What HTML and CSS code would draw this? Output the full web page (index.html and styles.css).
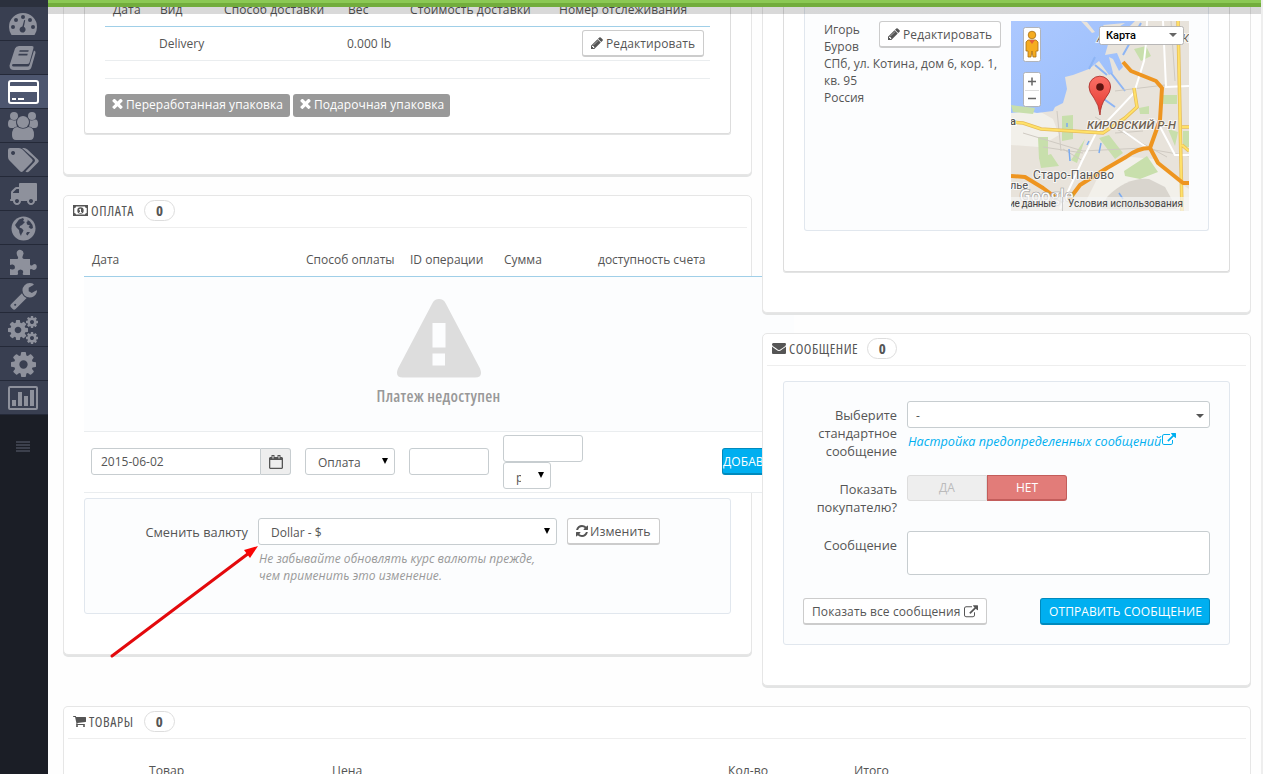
FILE: index.html
```
<!DOCTYPE html>
<html lang="ru">
<head>
    <meta charset="utf-8">
    <title>Заказы</title>
    <link rel="stylesheet" href="styles.css">
</head>
<body>
<svg class="defs">
    <symbol id="pencil" viewBox="0 0 1792 1792"><path d="M491 1536l91-91-235-235-91 91v107h128v128h107zm523-928q0-22-22-22-10 0-17 7l-542 542q-7 7-7 17 0 22 22 22 10 0 17-7l542-542q7-7 7-17zm-54-192l416 416-832 832h-416v-416zm683 96q0 53-37 90l-166 166-416-416 166-165q36-38 90-38 53 0 91 38l235 234q37 39 37 91z"/></symbol>
    <symbol id="times" viewBox="260 388 1272 1272"><path d="M1490 1322q0 40-28 68l-136 136q-28 28-68 28t-68-28l-294-294-294 294q-28 28-68 28t-68-28l-136-136q-28-28-28-68t28-68l294-294-294-294q-28-28-28-68t28-68l136-136q28-28 68-28t68 28l294 294 294-294q28-28 68-28t68 28l136 136q28 28 28 68t-28 68l-294 294 294 294q28 28 28 68z"/></symbol>
    <symbol id="refresh" viewBox="128 128 1536 1536"><path d="M1639 1056q0 5-1 7-64 268-268 434.500t-478 166.500q-146 0-282.500-55t-243.500-157l-129 129q-19 19-45 19t-45-19-19-45v-448q0-26 19-45t45-19h448q26 0 45 19t19 45-19 45l-137 137q71 66 161 102t187 36q134 0 250-65t186-179q11-17 53-117 8-23 30-23h192q13 0 22.500 9.500t9.500 22.500zm25-800v448q0 26-19 45t-45 19h-448q-26 0-45-19t-19-45 19-45l138-138q-148-137-349-137-134 0-250 65t-186 179q-11 17-53 117-8 23-30 23h-199q-13 0-22.500-9.500t-9.500-22.500v-7q65-268 270-434.500t480-166.500q146 0 284 55.500t245 156.500l130-129q19-19 45-19t45 19 19 45z"/></symbol>
    <symbol id="external" viewBox="0 0 1792 1600"><path d="M1408 928v320q0 119-84.500 203.500t-203.500 84.500h-832q-119 0-203.500-84.500t-84.500-203.500v-832q0-119 84.500-203.500t203.500-84.500h704q14 0 23 9t9 23v64q0 14-9 23t-23 9h-704q-66 0-113 47t-47 113v832q0 66 47 113t113 47h832q66 0 113-47t47-113v-320q0-14 9-23t23-9h64q14 0 23 9t9 23zm384-864v512q0 26-19 45t-45 19-45-19l-176-176-652 652q-10 10-23 10t-23-10l-114-114q-10-10-10-23t10-23l652-652-176-176q-19-19-19-45t19-45 45-19h512q26 0 45 19t19 45z"/></symbol>
    <symbol id="envelope" viewBox="0 256 1792 1408"><path d="M1792 710v794q0 66-47 113t-113 47h-1472q-66 0-113-47t-47-113v-794q44 49 101 87 362 246 497 345 57 42 92.500 65.500t94.500 48 110 24.500h2q51 0 110-24.500t94.500-48 92.500-65.500q170-123 498-345 57-39 100-87zm0-294q0 79-49 151t-122 123q-376 261-468 325-10 7-42.500 31t-54 38.500-52 32.500-57.500 27-50 9h-2q-23 0-50-9t-57.500-27-52-32.500-54-38.500-42.500-31q-91-64-262-182.500t-205-142.500q-62-42-117-115.500t-55-136.500q0-78 41.500-130t118.500-52h1472q65 0 112.500 47t47.500 113z"/></symbol>
    <symbol id="cart" viewBox="64 256 1664 1408"><path d="M704 1536q0 52-38 90t-90 38-90-38-38-90 38-90 90-38 90 38 38 90zm896 0q0 52-38 90t-90 38-90-38-38-90 38-90 90-38 90 38 38 90zm128-1088v512q0 24-16.500 42.500t-40.500 21.500l-1044 122q13 60 13 70 0 16-24 64h920q26 0 45 19t19 45-19 45-45 19h-1024q-26 0-45-19t-19-45q0-11 8-31.500t16-36 21.500-40 15.500-29.500l-177-823h-204q-26 0-45-19t-19-45 19-45 45-19h256q16 0 28.500 6.500t19.500 15.500 13 24.500 8 26 5.500 29.500 4.500 26h1201q26 0 45 19t19 45z"/></symbol>
    <symbol id="wrench" viewBox="64 128 1664 1664"><path d="M448 1472q0-26-19-45t-45-19-45 19-19 45 19 45 45 19 45-19 19-45zm644-420l-682 682q-37 37-90 37-52 0-91-37l-106-108q-38-36-38-90 0-53 38-91l681-681q39 98 114.500 173.500t173.500 114.500zm634-435q0 39-23 106-47 134-164.500 217.500t-258.500 83.500q-185 0-316.500-131.500t-131.500-316.500 131.500-316.500 316.500-131.500q58 0 121.500 16.500t107.500 46.500q16 11 16 28t-16 28l-293 169v224l193 107q5-3 79-48.500t135.500-81 70.500-35.500q15 0 23.500 10t8.500 25z"/></symbol>
    <symbol id="cog" viewBox="128 128 1536 1536"><path d="M1152 896q0-106-75-181t-181-75-181 75-75 181 75 181 181 75 181-75 75-181zm512-109v222q0 12-8 23t-20 13l-185 28q-19 54-39 91 35 50 107 138 10 12 10 25t-9 23q-27 37-99 108t-94 71q-12 0-26-9l-138-108q-44 23-91 38-16 136-29 186-7 28-36 28h-222q-14 0-24.500-8.500t-11.500-21.500l-28-184q-49-16-90-37l-141 107q-10 9-25 9-14 0-25-11-126-114-165-168-7-10-7-23 0-12 8-23 15-21 51-66.500t54-70.500q-27-50-41-99l-183-27q-13-2-21-12.500t-8-23.500v-222q0-12 8-23t19-13l186-28q14-46 39-92-40-57-107-138-10-12-10-24 0-10 9-23 26-36 98.500-107.500t94.500-71.500q13 0 26 10l138 107q44-23 91-38 16-136 29-186 7-28 36-28h222q14 0 24.500 8.500t11.500 21.500l28 184q49 16 90 37l142-107q9-9 24-9 13 0 25 10 129 119 165 170 7 8 7 22 0 12-8 23-15 21-51 66.500t-54 70.500q26 50 41 98l183 28q13 2 21 12.500t8 23.500z"/></symbol>
    <symbol id="truck" viewBox="0 256 1792 1408"><path d="M640 1408q0-52-38-90t-90-38-90 38-38 90 38 90 90 38 90-38 38-90zm-384-512h384v-256h-158q-13 0-22 9l-195 195q-9 9-9 22v30zm1280 512q0-52-38-90t-90-38-90 38-38 90 38 90 90 38 90-38 38-90zm256-1088v1024q0 15-4 26.500t-13.500 18.500-16.500 11.500-23.500 6-22.500 2-25.500 0-22.500-.5q0 106-75 181t-181 75-181-75-75-181h-384q0 106-75 181t-181 75-181-75-75-181h-64q-3 0-22.500.5t-25.500 0-22.500-2-23.500-6-16.500-11.500-13.500-18.500-4-26.500q0-26 19-45t45-19v-320q0-8-.5-35t0-38 2.500-34.500 6.500-37 14-30.500 22.500-30l198-198q19-19 50.500-32t58.500-13h160v-192q0-26 19-45t45-19h1024q26 0 45 19t19 45z"/></symbol>
</svg>

<nav class="sidebar">
    <a class="item"><svg width="30" height="24" viewBox="0 0 30 24"><path fill-rule="evenodd" d="M15 1a14 14 0 0 0-14 14q0 4 2.200 7.400 .4.600 1.200.6h21.200q.8 0 1.200-.6Q29 19 29 15A14 14 0 0 0 15 1zM5 13a2 2 0 1 1 0 4 2 2 0 0 1 0-4zm3-7a2 2 0 1 1 0 4 2 2 0 0 1 0-4zm7-3a2 2 0 1 1 0 4 2 2 0 0 1 0-4zm7 3a2 2 0 1 1 0 4 2 2 0 0 1 0-4zm3 7a2 2 0 1 1 0 4 2 2 0 0 1 0-4zm-8.800-5l1 .3-1.300 6.500a3 3 0 1 1-1.500-.300z"/></svg></a>
    <a class="item"><svg width="28" height="26" viewBox="0 0 28 26"><path fill-rule="evenodd" d="M10 1h13q2 0 1.500 2l-4 14.500q-.5 1.500-2.500 1.500H4.500q-1.500 0-1.500 1.200 0 1.300 1.800 1.300h13.700q1.500 0 2-1.500L25 5.500q2 .7 1.500 2.500l-4 14q-.8 3-3.500 3H5q-4.500 0-4.500-4.500L6 3.500Q7 1 10 1zm.7 4.200l-.4 1.600h9l.4-1.600zm-1 3.600l-.4 1.600h9l.4-1.600z"/></svg></a>
    <a class="item active"><svg width="31" height="24" viewBox="0 0 31 24"><path fill-rule="evenodd" d="M3 0h25q3 0 3 3v18q0 3-3 3H3q-3 0-3-3V3q0-3 3-3zM2 3v3h27V3q0-1-1-1H3Q2 2 2 3zm0 9v9q0 1 1 1h25q1 0 1-1v-9zm2 6h4v2H4zm6 0h6v2h-6z"/></svg></a>
    <a class="item"><svg width="30" height="28" viewBox="0 0 30 28"><circle cx="6" cy="4" r="4"/><circle cx="24" cy="4" r="4"/><path d="M0 12q0-5 3-4.500 3 1.800 5.300.5-.8 4.500 1.700 8H3q-3 0-3-4zM30 12q0-5-3-4.500-3 1.800-5.300.5.800 4.500-1.700 8h7q3 0 3-4z"/><circle class="gap" cx="15" cy="10" r="6.600"/><path class="gap" d="M3.500 23q0-8.500 6-8.500h11Q26.500 14.500 26.500 23v2h-23z"/><circle cx="15" cy="10" r="6"/><path d="M4 23q0-8 5.500-8 5.500 3.500 11 0Q26 15 26 23q0 5-4 5H8q-4 0-4-5z"/></svg></a>
    <a class="item"><svg width="31" height="25" viewBox="0 0 31 25"><path fill-rule="evenodd" d="M2 0h9q2 0 3.500 1.500L24 11q1.600 1.500 0 3L15 23.300q-1.500 1.500-3 0L1.500 12.500Q0 11 0 9V2q0-2 2-2zm3 3a2 2 0 1 0 .1 0z"/><path d="M14 0h2q2 0 3.500 1.500L30 11.500q1.500 1.500 0 3l-9 9q-2 1.500-3.500 0l8.500-9q2-2 0-4z"/></svg></a>
    <a class="item"><svg width="28" height="22"><use href="#truck"/></svg></a>
    <a class="item"><svg width="25" height="25" viewBox="0 0 25 25"><circle cx="12.500" cy="12.500" r="12"/><path class="gap" d="M8 3.500l4-1.500 1 1.500-1 1.500 2 1-3 3-2 1-.5 1.500 2.500 1 1.500 2-1 2-1 1.500-.5 2-1.500-3-.5-3-2.500-2.500L4 9zM16 3.500l3 2 2.500 3.500 .5 3-2 1-2.500-2 1.500-1.500-3-1-.5-2.500 1.500-1zM16 16l3 0-2.500 3.500-1.500-1.500z"/></svg></a>
    <a class="item"><svg width="27" height="26" viewBox="0 0 27 26"><path d="M0 10h7q1.500 0 1-2Q6 5 7 2.500 8.500 0 11 1q3 1 2.500 4-1.500 3-1 4 .5 1 2 1H20v5q0 2 2 1.500Q24 14 26 15.500q1.500 2 0 4.500-2 2-4 .3-2-.8-2 1V26h-6q-2 0-1-2 1-3-2.500-3.500-3.500.500-2.500 3.500.5 2-1.500 2H0V20l2 .5q3 .5 3-2.500-.5-3-3-2.500L0 16z"/></svg></a>
    <a class="item"><svg width="27" height="27"><use href="#wrench"/></svg></a>
    <a class="item"><svg width="31" height="28"><use href="#cog" x="0" y="4" width="20" height="20"/><use href="#cog" x="18" y="0" width="12" height="12"/><use href="#cog" x="18" y="16" width="12" height="12"/></svg></a>
    <a class="item"><svg width="25" height="25"><use href="#cog"/></svg></a>
    <a class="item"><svg width="30" height="24" viewBox="0 0 30 24"><path fill-rule="evenodd" d="M2 0h26q2 0 2 2v20q0 2-2 2H2q-2 0-2-2V2q0-2 2-2zm0 2v20h26V2zM4 14h4v6H4zm6-8h4v14h-4zm6 4h4v10h-4zm6-6h4v16h-4z"/></svg></a>
    <a class="collapse"><i></i><i></i><i></i><i></i></a>
</nav>

<div class="topbar"></div>

<main>
    <div class="columns">
        <div class="left">
            <section class="panel panel-shipping">
                <div class="box">
                    <div class="ship-row ship-head">
                        <span>Дата</span><span>Вид</span><span>Способ доставки</span><span>Вес</span><span>Стоимость доставки</span><span>Номер отслеживания</span>
                    </div>
                    <div class="ship-row ship-data">
                        <span></span><span>Delivery</span><span></span><span>0.000 lb</span><span></span>
                        <button class="btn btn-edit"><svg width="14" height="14"><use href="#pencil"/></svg>Редактировать</button>
                    </div>
                    <div class="labels">
                        <span class="label label-recycled"><svg width="11" height="11"><use href="#times"/></svg>Переработанная упаковка</span>
                        <span class="label label-gift"><svg width="11" height="11"><use href="#times"/></svg>Подарочная упаковка</span>
                    </div>
                </div>
            </section>

            <section class="panel panel-payment">
                <h3><svg width="15" height="11" viewBox="0 0 15 11"><path fill-rule="evenodd" d="M0 0h15v11H0zM3 1.500Q3 3 1.300 3v5Q3 8 3 9.500h9Q12 8 13.700 8V3Q12 3 12 1.500zM7.500 2.300a3.200 3.200 0 1 1 0 6.400 3.200 3.200 0 0 1 0-6.400zM7 3.800L6 4.700v.5h1v2H6v.8h3v-.8H8V3.800z"/></svg><span class="title">ОПЛАТА</span><span class="badge">0</span></h3>
                <div class="pay-table">
                    <div class="pay-row pay-head">
                        <span>Дата</span><span>Способ оплаты</span><span>ID операции</span><span>Сумма</span><span>доступность счета</span>
                    </div>
                    <div class="pay-empty">
                        <svg width="86" height="79" viewBox="0 0 86 79"><path fill-rule="evenodd" d="M36.500 4q2-4 6.500-4t6.500 4L84 69.500q3.500 9-5 9H7q-8.500 0-5-9zM36.500 24v24.500h13V24zm0 30.500v12h12.500v-12z"/></svg>
                        <p>Платеж недоступен</p>
                    </div>
                    <div class="pay-row pay-form">
                        <div class="date"><input type="text" value="2015-06-02"><span class="addon"><svg width="14" height="14" viewBox="0 0 14 14"><path fill-rule="evenodd" d="M1 2h1.500V0h3v2h3V0h3v2H13l1 1v10l-1 1H1l-1-1V3zm.3 3v7.700h11.400V5zM3.500 1v2.500h1V1zm6 0v2.500h1V1z"/></svg></span></div>
                        <div class="select method"><span>Оплата</span></div>
                        <input type="text" class="short">
                        <div class="amount"><input type="text" class="short"><div class="select currency"><span>р</span></div></div>
                        <span></span>
                        <button class="btn btn-primary btn-add">ДОБАВИТЬ</button>
                    </div>
                </div>
                <div class="well well-currency">
                    <label>Сменить валюту</label>
                    <div class="field">
                        <div class="select"><span>Dollar - $</span></div>
                        <p class="help">Не забывайте обновлять курс валюты прежде,<br>чем применить это изменение.</p>
                    </div>
                    <button class="btn btn-change"><svg width="12" height="12"><use href="#refresh"/></svg>Изменить</button>
                </div>
            </section>
        </div>

        <div class="right">
            <section class="panel panel-address">
                <div class="box">
                    <div class="well">
                        <div class="address">
                            <button class="btn btn-edit"><svg width="14" height="14"><use href="#pencil"/></svg>Редактировать</button>
                            Игорь<br>Буров<br>СПб, ул. Котина, дом 6, кор. 1,<br>кв. 95<br>Россия
                        </div>
                        <svg class="map" width="178" height="190" viewBox="0 0 178 190">
                            <defs>
                                <linearGradient id="sea" x1="0" y1="0" x2="1" y2="1"><stop offset="0" stop-color="#acc8ff"/><stop offset="1" stop-color="#98bdfa"/></linearGradient>
                                <linearGradient id="pin" x1="0" y1="0" x2="0" y2="1"><stop offset="0" stop-color="#fc7066"/><stop offset="1" stop-color="#e0362e"/></linearGradient>
                            </defs>
                            <rect width="178" height="190" fill="#e8e3db"/>
                            <path fill="#f2f0ea" d="M0 88l28 2 14 8 6 16-20 12-28-2zM90 150l30-14 24 2 22 22 12 8v22H70z"/>
                            <path fill="#d9d5ce" d="M96 176q20-20 42-18l16 8 12 22H90z"/>
                            <path fill="url(#sea)" d="M0 0h124l-8 8-10-4-4 6 6 4-10 6-4 14 12-2 6 14-4 4-6-12-4-2 4 16-4 2-10-14-10 8-16 6-8 2 2 12-4 14-8 4-2 4-16 2-10-2-16 2z"/>
                            <path fill="#e8e3db" d="M70 0l6 1 8 10-3 1zM92 4l22-2-16 10zM58 64l8-4 2 8-6 6-6-2z"/>
                            <path stroke="#8db5f5" fill="none" stroke-width="2" d="M84 36l-6 12M100 52l14 18M96 20l18-14M130 2l-18 32M90 76l14 10M84 44l12 10"/>
                            <g fill="#c8dfac">
                                <path d="M51 95l11-1v24l-11 2zM123 28l12-3 5 10-10 5zM152 74h14v9h-14zM128 87l10-2v8h-9zM88 117l10-3 14 18-8 6zM113 150l23-15 11 16-18 7-15-3zM28 137l12-4 8 12-18 2zM157 108l10 3-3 14zM0 84l24 3-2 6-20-2zM74 118l-8 24-6-3zM172 110h6v16h-6zM27 116h10v22H28z"/>
                            </g>
                            <path stroke="#cfcac2" fill="none" d="M12 112l60 18 60-3 46 8M32 126l40 6M46 90l4 40M104 70l50-6M84 96l72 40M104 112l28-2M160 0l4 60M72 140l-20-12"/>
                            <path stroke="#fff" fill="none" stroke-width="2" d="M136 0l-1 22-2 18-10 32-38 40-14 28-22 48M152 0l3 66 23-1M146 100l18 34 14 0M112 110l26 18"/>
                            <path stroke="#e6bc58" fill="none" stroke-width="3.500" d="M0 101l12 1 18 6 62 4 22-15 12-11-3-19M167 0l4 190M171 106h7M171 124l7 6"/>
                            <path stroke="#ffe168" fill="none" stroke-width="2" d="M0 101l12 1 18 6 62 4 22-15 12-11-3-19M167 0l4 190M171 106h7M171 124l7 6"/>
                            <path stroke="#ee9520" fill="none" stroke-width="4" stroke-linejoin="round" d="M112 41l8 9 25 10 6 7-2 32-10 28 8 15 25 20h6M139 127q-12 0-24 9l-19 11-27 17-12 16M0 155l14 1 18 11 12 9"/>
                            <path stroke="#79aaf0" fill="none" stroke-width="1.500" d="M56 102v4M90 122l-2 10M76 124l2-4M58 128l1 12M108 172l4 6"/>
                            <g class="place">
                                <text x="76" y="108" font-size="11.500" font-style="italic" font-weight="500" fill="#6f6252" textLength="89">КИРОВСКИЙ Р-Н</text>
                                <text x="22" y="158" font-size="12" textLength="81">Старо-Паново</text>
                                <text x="-1" y="104" font-size="11" font-weight="500">а</text>
                                <text x="-1" y="168" font-size="11">лье</text>
                                <text x="171" y="21" font-size="11" font-style="italic" fill="#6f6252">КИ</text>
                                <text x="86" y="21" font-size="11" font-style="italic" fill="#6f6252">А</text>
                            </g>
                            <text class="google" x="8" y="181" textLength="55">Google</text>
                            <path fill="#f5f5f5" fill-opacity=".7" d="M0 176h178v14H0z"/>
                            <g class="terms"><text x="-2" y="186" textLength="47">ие данные</text><text x="57" y="186" textLength="115">Условия использования</text></g>
                            <path stroke="#ccc" d="M51.500 176v14"/>
                            <path fill="url(#pin)" stroke="#a52a25" stroke-width=".8" d="M89 94q-1-10-6-17-5-6-5-11a10.800 10.800 0 0 1 21.600 0q0 5-5 11-5 7-5.600 17z"/>
                            <circle cx="89" cy="66" r="3.800" fill="#5e1410"/>
                            <g fill="#fff" stroke="#a8a8a8" stroke-width=".8"><rect x="12.500" y="6.500" width="17" height="34" rx="2"/><rect x="12.500" y="51.500" width="17" height="34" rx="2"/><rect x="88.500" y="5.500" width="84" height="18" rx="2"/></g>
                            <path fill="#f5ac20" stroke="#a86f16" stroke-width=".8" d="M17 19h8l2 2v9h-2v6h-3l-1-6-1 6h-3v-6h-2v-9z"/><circle cx="21" cy="14" r="3.800" fill="#f5ac20" stroke="#a86f16" stroke-width=".8"/><path fill="#e2613b" d="M18 19h6l-3 4z"/>
                            <path stroke="#666" stroke-width="1.500" d="M17 60.500h8M21 56.500v8M17 77.500h8"/><path stroke="#ddd" d="M14 69.500h14"/>
                            <text class="map-type" x="95" y="18" textLength="30">Карта</text><path fill="#666" d="M158 12h8l-4 4z"/>
                        </svg>
                    </div>
                </div>
            </section>

            <section class="panel panel-message">
                <h3><svg width="14" height="11"><use href="#envelope"/></svg><span class="title">СООБЩЕНИЕ</span><span class="badge">0</span></h3>
                <div class="well">
                    <div class="form-row row-template">
                        <label>Выберите стандартное сообщение</label>
                        <div>
                            <div class="select chosen"><span>-</span></div>
                            <a class="config">Настройка предопределенных сообщений<svg width="14" height="12.500"><use href="#external"/></svg></a>
                        </div>
                    </div>
                    <div class="form-row row-show">
                        <label>Показать покупателю?</label>
                        <div class="switch"><span>ДА</span><span class="on">НЕТ</span></div>
                    </div>
                    <div class="form-row row-text">
                        <label>Сообщение</label>
                        <textarea></textarea>
                    </div>
                    <div class="actions">
                        <button class="btn btn-all">Показать все сообщения<svg width="14" height="13"><use href="#external"/></svg></button>
                        <button class="btn btn-primary btn-send">ОТПРАВИТЬ СООБЩЕНИЕ</button>
                    </div>
                </div>
            </section>
        </div>
    </div>

    <section class="panel panel-products">
        <h3><svg width="13" height="11"><use href="#cart"/></svg><span class="title">ТОВАРЫ</span><span class="badge">0</span></h3>
        <div class="prod-head"><span>Товар</span><span>Цена</span><span>Кол-во</span><span>Итого</span></div>
    </section>
</main>

<svg class="arrow" width="152" height="116" viewBox="0 0 152 116"><path stroke="#e3090c" stroke-width="3" stroke-linecap="round" d="M3 112L140 9"/><path fill="#fa0505" d="M149 2l-8 12-6-8z"/></svg>
</body>
</html>
```
FILE: styles.css
```
* {
    box-sizing: border-box;
}

body {
    margin: 0;
    height: 774px;
    overflow: hidden;
    position: relative;
    display: flex;
    background: #fefefe;
    border-right: 2px solid #eee;
    font: 12px/17px "Open Sans", sans-serif;
    color: #555;
}

svg {
    fill: currentColor;
    flex: none;
}

.defs {
    position: absolute;
    width: 0;
    height: 0;
}

/* left menu */
.sidebar {
    width: 48px;
    height: 774px;
    flex: none;
    padding-top: 7px;
    background: linear-gradient(#2b303d 7px, #1b1e26 7px);
}

.item {
    display: flex;
    height: 34px;
    align-items: center;
    justify-content: center;
    padding-right: 2px;
    padding-top: 1px;
    background: #393f51;
    border-bottom: 1px solid #242938;
    color: #8e919c;
}

.item.active {
    background: #4d566f;
    color: #fff;
}

.gap {
    fill: #393f51;
}

.collapse {
    display: flex;
    flex-direction: column;
    gap: 1px;
    width: 14px;
    margin: 26px 0 0 16px;
}

.collapse i {
    height: 2px;
    background: #3c404c;
}

.topbar {
    position: absolute;
    left: 48px;
    right: 0;
    top: 0;
    height: 14px;
    z-index: 5;
    background: linear-gradient(#8bc954 3px, #72ad3c 3px, #72ad3c 7px, rgba(0, 0, 0, .15) 7px);
}

/* page */
main {
    flex: 1;
    padding-left: 15px;
    padding-right: 10px;
}

.columns {
    display: flex;
    gap: 10px;
    height: 706px;
}

.left {
    width: 689px;
}

.right {
    width: 489px;
    position: relative;
    z-index: 2;
}

.panel {
    background: #fff;
    border: 1px solid #e6e6e6;
    border-radius: 5px;
    box-shadow: 0 2px 0 #e3e4e4;
    padding: 0 20px;
}

.panel-shipping,
.panel-address {
    border-top: 0;
    border-radius: 0 0 5px 5px;
}

.panel h3 {
    display: flex;
    align-items: center;
    height: 32px;
    margin: 0 -16px;
    padding-left: 5px;
    padding-bottom: 2px;
    border-bottom: 1px solid #eee;
    font-size: 14px;
    font-weight: 400;
}

.title {
    font-stretch: 75%;
    letter-spacing: .6px;
    margin-left: 3px;
    margin-right: 10px;
}

.badge {
    width: 31px;
    height: 21px;
    line-height: 19px;
    border: 1px solid #ddd;
    border-radius: 11px;
    text-align: center;
    font-size: 15px;
    font-weight: 700;
    font-stretch: 75%;
}

.panel-message .title {
    letter-spacing: .5px;
    margin-right: 9px;
}

.panel-message .badge {
    width: 30px;
}

.box {
    border: 1px solid #ddd;
    border-top: 0;
    border-radius: 0 0 3px 3px;
    box-shadow: 0 1px 0 #e3e4e4;
}

.well {
    background: #fcfdfe;
    border: 1px solid #e1e7ee;
    border-radius: 3px;
}

.btn {
    display: flex;
    align-items: center;
    height: 27px;
    padding: 0 8px;
    border: 1px solid #ccc;
    border-bottom-width: 2px;
    border-radius: 3px;
    background: #fff;
    font: 12px/17px "Open Sans", sans-serif;
    letter-spacing: .1px;
    color: #555;
    white-space: nowrap;
    gap: 2px;
}

.btn-primary {
    background: #00aff0;
    border-color: #008abd;
    color: #fff;
}

.btn-edit {
    width: 122px;
    padding: 0 7px;
}

/* shipping */
.panel-shipping {
    height: 175px;
}

.panel-shipping .box {
    height: 134px;
    padding: 0 20px;
}

.ship-row {
    display: grid;
    grid-template-columns: 47px 64px 124px 62px 149px 122px;
    padding-left: 8px;
    white-space: nowrap;
    align-items: center;
}

.ship-head {
    height: 27px;
    padding-bottom: 7px;
    border-bottom: 1px solid #a0cfe8;
    letter-spacing: .12px;
}

.ship-data {
    height: 34px;
    padding-left: 7px;
    grid-template-columns: 47px 64px 124px 62px 173px 122px;
    border-bottom: 1px solid #eaedef;
}

.labels {
    display: flex;
    gap: 3px;
    margin-top: 17px;
    padding-top: 15px;
    border-top: 1px solid #eaedef;
}

.label {
    display: flex;
    align-items: center;
    height: 23px;
    gap: 3px;
    padding: 0 7px 2px;
    background: #999;
    border-radius: 3px;
    white-space: nowrap;
    letter-spacing: .08px;
    color: #fff;
}

.label-recycled {
    width: 185px;
}

.label-gift {
    width: 157px;
}

/* payment */
.panel-payment {
    height: 460px;
    margin-top: 20px;
}

.pay-table {
    width: 710px;
    padding-top: 15px;
}

.pay-row {
    display: grid;
    grid-template-columns: 214px 104px 94px 94px 125px 78px;
    padding-left: 7px;
    align-items: center;
    white-space: nowrap;
}

.pay-head {
    height: 34px;
    border-bottom: 1px solid #a0cfe8;
    padding-left: 8px;
}

.pay-empty {
    height: 155px;
    padding: 22px 0 0 312px;
    background: #fcfdfe;
    border-bottom: 1px solid #eaedef;
    color: #ddd;
}

.pay-empty p {
    width: 125px;
    margin: 10px 0 0 -20px;
    text-align: center;
    font-size: 16px;
    font-stretch: 75%;
    font-weight: 600;
    letter-spacing: .3px;
    color: #999;
    white-space: nowrap;
}

.pay-empty svg {
    display: block;
}

.pay-form {
    height: 61px;
    background: #fff;
    border-bottom: 1px solid #eaedef;
    position: relative;
    padding-bottom: 1px;
}

input,
textarea,
.select {
    display: block;
    height: 27px;
    border: 1px solid #c7cdd0;
    border-radius: 3px;
    background: #fff;
    padding: 0 9px;
    font: 12px "Open Sans", sans-serif;
    color: #555;
}

.date {
    display: flex;
    width: 200px;
}

.date input {
    width: 170px;
    border-radius: 3px 0 0 3px;
}

.addon {
    width: 30px;
    height: 27px;
    display: flex;
    align-items: center;
    justify-content: center;
    border: 1px solid #c7cdd0;
    border-left: 0;
    border-radius: 0 3px 3px 0;
    background: #eee;
}

.select {
    display: flex;
    align-items: center;
    justify-content: space-between;
    padding: 1px 6px 0 12px;
}

.select::after {
    content: "";
    border: 3.5px solid transparent;
    border-top: 6px solid #000;
    border-bottom: 0;
    margin-top: -3px;
}

.method {
    width: 90px;
}

.short {
    width: 80px;
}

.currency {
    width: 48px;
    padding-top: 5px;
}

.currency::after {
    margin-top: -6px;
}

.currency span {
    width: 5px;
    overflow: hidden;
}

.btn-add {
    padding: 0;
}

.well-currency {
    display: flex;
    height: 116px;
    margin-top: 5px;
    padding-top: 19px;
    width: 647px;
}

.well-currency label {
    width: 163px;
    margin-right: 10px;
    padding-top: 6px;
    text-align: right;
    font-size: 12.8px;
}

.well-currency .field {
    width: 299px;
    margin-right: 10px;
}

.btn-change {
    width: 93px;
    font-size: 12.3px;
}

.help {
    margin: 5px 0 0 1px;
    font-style: italic;
    letter-spacing: .05px;
    color: #999;
    white-space: nowrap;
}

/* customer address */
.panel-address {
    height: 313px;
}

.panel-address .box {
    height: 272px;
    padding: 0 20px;
}

.panel-address .well {
    display: flex;
    height: 231px;
    border-top: 0;
    border-radius: 0 0 3px 3px;
    padding: 21px 0 0 19px;
}

.address {
    width: 177px;
    margin-right: 10px;
    white-space: nowrap;
}

.address .btn {
    float: right;
}

.place text {
    font-family: Roboto, sans-serif;
    stroke: #fff;
    stroke-width: 2px;
    stroke-opacity: .7;
    paint-order: stroke;
}

.google {
    font: 700 17px "Open Sans", sans-serif;
    fill: #fff;
    stroke: #999;
    stroke-width: .6px;
}

.terms text {
    font: 10px Roboto, sans-serif;
    fill: #444;
}

.map-type {
    font: 500 11px Roboto, sans-serif;
    fill: #000;
}

/* message */
.panel-message {
    height: 353px;
    margin-top: 20px;
}

.panel-message .well {
    height: 264px;
    margin-top: 15px;
    padding: 19px;
}

.form-row {
    display: grid;
    grid-template-columns: 94px 303px;
    gap: 10px;
}

.form-row label {
    padding-top: 5px;
    text-align: right;
    font-size: 12.8px;
    line-height: 18px;
}

.row-template {
    height: 74px;
}

.row-show {
    height: 56px;
}

.row-text {
    height: 67px;
}

.chosen {
    padding-left: 8px;
    padding-right: 5px;
}

.chosen::after {
    border-width: 4px 4px 0;
    border-top-color: #555;
    margin-top: 2px;
}

.config {
    display: flex;
    margin-top: 5px;
    margin-left: 1px;
    font-size: 12.6px;
    font-style: italic;
    letter-spacing: .03px;
    color: #00aff0;
    white-space: nowrap;
    gap: 1px;
}

.switch {
    display: flex;
    width: 160px;
    height: 26px;
    line-height: 24px;
    border-radius: 3px;
    text-align: center;
}

.switch span {
    width: 80px;
    background: #eee;
    border: 1px solid #ddd;
    border-radius: 3px 0 0 3px;
    color: #bbb;
}

.switch .on {
    background: #e27c79;
    border: 1px solid #c35d5b;
    border-bottom-width: 2px;
    border-radius: 0 3px 3px 0;
    color: #fff;
}

textarea {
    width: 303px;
    height: 44px;
    resize: none;
}

.actions {
    display: flex;
    justify-content: space-between;
}

.btn-all {
    width: 184px;
    gap: 3px;
}

.btn-send {
    width: 170px;
}

/* products */
.panel-products {
    height: 68px;
    border-bottom: 0;
    border-radius: 5px 5px 0 0;
    box-shadow: none;
    overflow: hidden;
}

.prod-head {
    display: grid;
    grid-template-columns: 183px 396px 126px 100px;
    margin-top: 23px;
    padding-left: 65px;
    font-size: 12.2px;
}

.arrow {
    position: absolute;
    left: 109px;
    top: 544px;
    z-index: 6;
}
```
